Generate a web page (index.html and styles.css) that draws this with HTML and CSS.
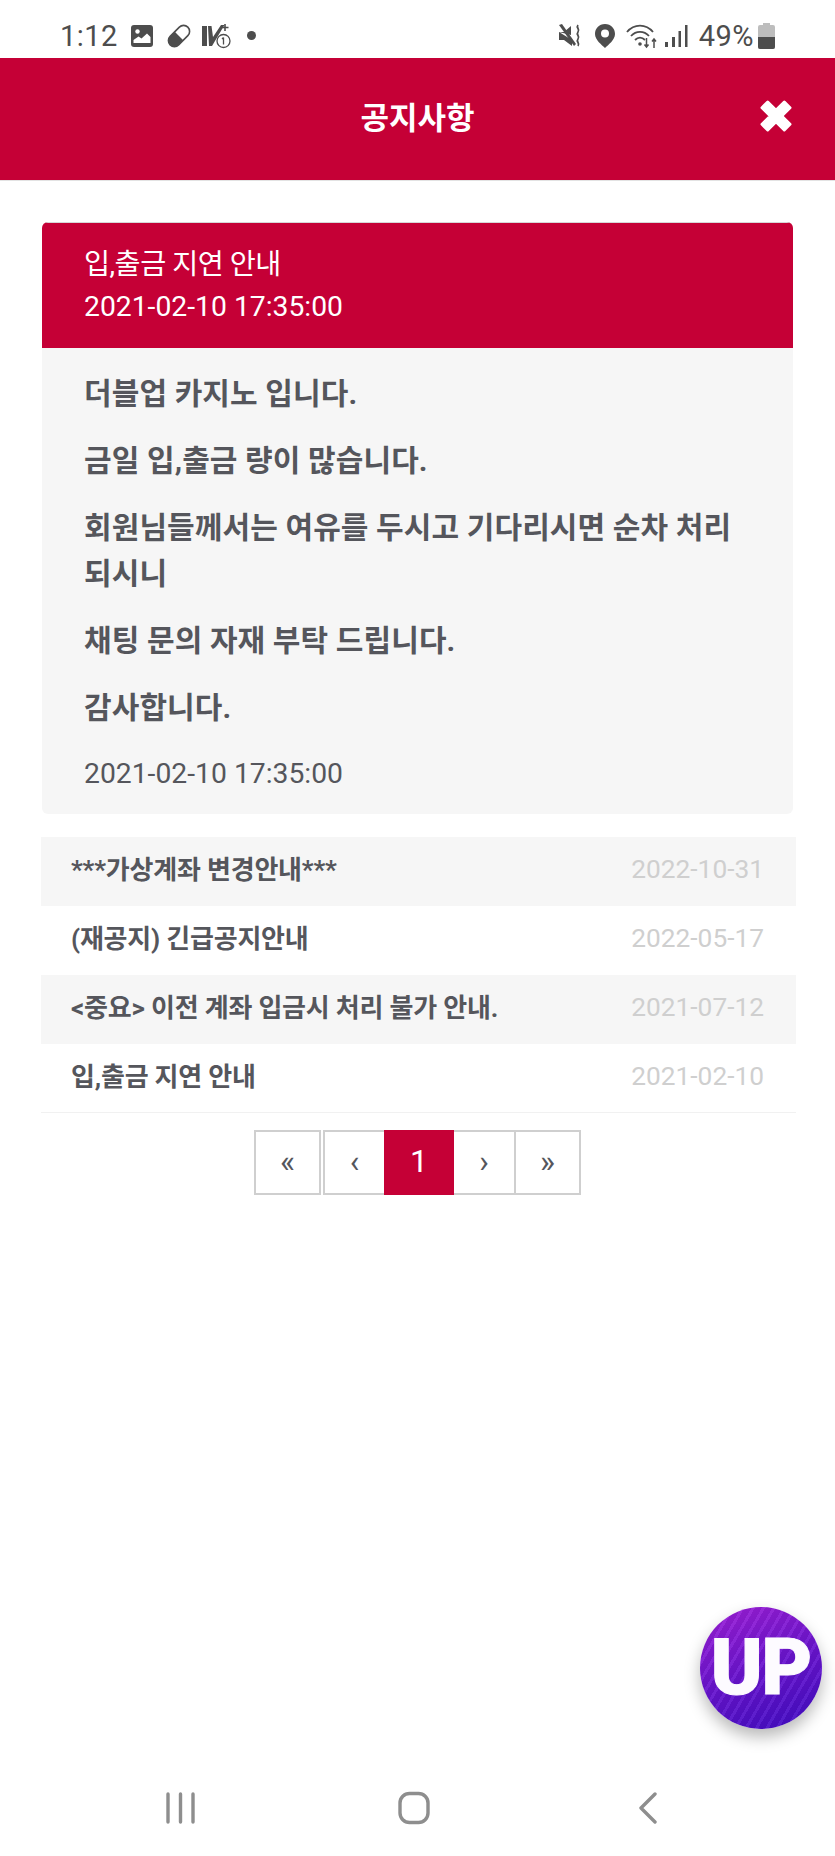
FILE: index.html
```html
<!DOCTYPE html>
<html lang="ko">
<head>
<meta charset="utf-8">
<title>공지사항</title>
<link rel="stylesheet" href="styles.css">
</head>
<body>
<div class="app">
  <div class="status">
    <div class="status-left">
      <span class="clock">1:12</span>
      <svg class="ic" width="24" height="24" viewBox="0 0 24 24"><rect x="1" y="1" width="22" height="22" rx="3" fill="#4d4d4d"/><circle cx="7.5" cy="7.5" r="2.2" fill="#fff"/><path d="M3.5 19v-3l5-3.5 3 2 5.500-5 3.500 3.500v6z" fill="#fff"/></svg>
      <svg class="ic pill" width="26" height="26" viewBox="0 0 26 26"><g transform="rotate(-45 13 13)"><rect x="0.500" y="7" width="25" height="12" rx="6" fill="#fff" stroke="#4d4d4d" stroke-width="1.600"/><path d="M13 7H6.500a6 6 0 0 0 0 12H13z" fill="#4d4d4d"/></g></svg>
      <svg class="ic vol" width="31" height="26" viewBox="0 0 31 26"><path d="M1 3h5v20H1zM7 3h3.500l1.500 11L20 2h3.500L11 23H8z" fill="#4d4d4d"/><path d="M24 1v7M20.500 4.500h7" stroke="#4d4d4d" stroke-width="1.600"/><circle cx="22.500" cy="18" r="6.500" fill="#fff" stroke="#4d4d4d" stroke-width="1.300"/><path d="M22.500 14.500v7M21 16l1.500-1.500" stroke="#4d4d4d" stroke-width="1.300" fill="none"/></svg>
      <span class="dot"></span>
    </div>
    <div class="status-right">
      <svg class="ic" width="26" height="26" viewBox="0 0 26 26"><path d="M1 2l3-1 14 20-2 2z" fill="#4d4d4d"/><path d="M1 9h5l7-6v9zM1 9v8h5l8 6v-6z" fill="#4d4d4d"/><path d="M20 2c-2.500 3 2.500 4 0 7s2.500 4 0 7 2.500 4 0 7" fill="none" stroke="#4d4d4d" stroke-width="1.800"/></svg>
      <svg class="ic" width="22" height="26" viewBox="0 0 22 26"><path d="M11 1C5 1 1 5.500 1 11c0 6 7 11 10 14 3-3 10-8 10-14C21 5.500 17 1 11 1z" fill="#4d4d4d"/><circle cx="11" cy="10.500" r="4" fill="#fff"/></svg>
      <svg class="ic" width="32" height="26" viewBox="0 0 32 26"><g fill="none" stroke="#4d4d4d" stroke-width="1.800"><path d="M1 9c7-8.500 19-8.500 26 0"/><path d="M5 13c5-5.500 13-5.500 18 0"/><path d="M9 17c3-3 7-3 10 0"/></g><circle cx="14" cy="21" r="1.800" fill="#4d4d4d"/><path d="M20.500 15v9M18.500 21.500l2 2.500 2-2.500M28 25v-9M26 18.500l2-2.500 2 2.500" fill="none" stroke="#4d4d4d" stroke-width="1.500"/></svg>
      <svg class="ic sig" width="24" height="24" viewBox="0 0 24 24"><path d="M1 18h3v5H1zM8 13h3v10H8zM14.500 7H17v16h-2.500zM21 1h2.500v22H21z" fill="#4d4d4d"/></svg>
      <span class="pct">49%</span>
      <svg class="ic batt" width="17" height="26" viewBox="0 0 17 26"><path d="M5 0h7v2h3a2 2 0 0 1 2 2v20a2 2 0 0 1-2 2H2a2 2 0 0 1-2-2V4a2 2 0 0 1 2-2h3z" fill="#bdbdbd"/><path d="M0 14h17v10a2 2 0 0 1-2 2H2a2 2 0 0 1-2-2z" fill="#4d4d4d"/></svg>
    </div>
  </div>

  <header class="top">
    <h1 class="top-title">공지사항</h1>
    <svg class="top-close" width="36" height="36" viewBox="0 0 36 36"><path d="M18 12.300 26.300 4 32 9.700 23.700 18 32 26.300 26.300 32 18 23.700 9.700 32 4 26.300 12.300 18 4 9.700 9.700 4z" fill="#fff" stroke="#fff" stroke-width="3" stroke-linejoin="round"/></svg>
  </header>

  <main class="content">
    <section class="card">
      <div class="card-head">
        <div class="card-subject">입,출금 지연 안내</div>
        <div>2021-02-10 17:35:00</div>
      </div>
      <div class="card-body">
        <p class="msg">더블업 카지노 입니다.</p>
        <p class="msg">금일 입,출금 량이 많습니다.</p>
        <p class="msg">회원님들께서는 여유를 두시고 기다리시면 순차 처리 되시니</p>
        <p class="msg">채팅 문의 자재 부탁 드립니다.</p>
        <p class="msg">감사합니다.</p>
        <div class="card-date">2021-02-10 17:35:00</div>
      </div>
    </section>

    <ul class="list">
      <li class="row alt"><span class="row-title">***가상계좌 변경안내***</span><span class="row-date">2022-10-31</span></li>
      <li class="row"><span class="row-title">(재공지) 긴급공지안내</span><span class="row-date">2022-05-17</span></li>
      <li class="row alt"><span class="row-title">&lt;중요&gt; 이전 계좌 입금시 처리 불가 안내.</span><span class="row-date">2021-07-12</span></li>
      <li class="row"><span class="row-title">입,출금 지연 안내</span><span class="row-date">2021-02-10</span></li>
    </ul>

    <nav class="pager">
      <a class="pg pg-first">«</a>
      <a class="pg pg-prev">‹</a>
      <a class="pg pg-on">1</a>
      <a class="pg pg-next">›</a>
      <a class="pg pg-last">»</a>
    </nav>
  </main>

  <div class="up"><span class="up-text">UP</span></div>

  <footer class="navbar">
    <svg width="32" height="32" viewBox="0 0 32 32"><path d="M3 2v28M15.500 2v28M28 2v28" stroke="#8e8e8e" stroke-width="3.400" stroke-linecap="round"/></svg>
    <svg class="nav-home" width="32" height="34" viewBox="0 0 32 34"><rect x="2" y="2.500" width="28" height="29" rx="9.500" fill="none" stroke="#8e8e8e" stroke-width="3.400"/></svg>
    <svg class="nav-back" width="20" height="32" viewBox="0 0 20 32"><path d="M17 2 3 16l14 14" fill="none" stroke="#8e8e8e" stroke-width="3.400" stroke-linecap="round" stroke-linejoin="round"/></svg>
  </footer>
</div>
</body>
</html>
```

FILE: styles.css
```css
* { box-sizing: border-box; }
html, body { margin: 0; padding: 0; background: #fff; }
body { font-family: Roboto, "Noto Sans CJK KR", "Noto Sans", sans-serif; color: #55565c; }
.app { position: relative; width: 835px; height: 1856px; display: flex; flex-direction: column; overflow: hidden; }

.status { height: 58px; display: flex; justify-content: space-between; align-items: center; padding: 13px 60px 0 60px; color: #4d4d4d; }
.status-left, .status-right { display: flex; align-items: center; }
.clock { font-size: 29px; margin-right: 12px; letter-spacing: 0.5px; }
.ic { flex: none; }
.pill { margin-left: 12px; }
.vol { margin-left: 9px; }
.dot { width: 9px; height: 9px; border-radius: 50%; background: #4d4d4d; margin-left: 15px; }
.status-right .ic { margin-left: 10px; }
.status-right .sig { margin-left: 6px; }
.pct { font-size: 29px; margin-left: 11px; letter-spacing: 0.5px; }
.status-right .batt { margin-left: 4px; }

.top { position: relative; height: 123px; background: #c50036; display: flex; align-items: center; justify-content: center; border-bottom: 1px solid #e3e3e3; }
.top-title { margin: 0; font-size: 31px; font-weight: 700; color: #fff; line-height: 1.2; }
.top-close { position: absolute; right: 41px; top: 40px; }

.content { flex: 1; padding: 41px 42px 0 42px; min-height: 0; }

.card { background: #f6f6f6; border-radius: 6px; overflow: hidden; }
.card-head { height: 126px; background: #c50036; color: #fff; font-size: 28.3px; padding: 21px 42px 0; line-height: 42px; border-top: 1px solid #d7d7d7; }
.card-subject { letter-spacing: -0.5px; }
.card-body { padding: 23px 42px 0; height: 466px; }
.msg { margin: 0 0 21px; font-size: 30px; line-height: 46px; font-weight: 700; color: #55565c; letter-spacing: 0.1px; }
.card-date { font-size: 28.3px; line-height: 42px; margin-top: 22px; color: #55565c; }

.list { list-style: none; margin: 23px -3px 0 -1px; padding: 0; }
.row { height: 69px; display: flex; justify-content: space-between; align-items: center; padding: 0 32px 0 30px; border-bottom: 1px solid transparent; }
.row.alt { background: #f6f6f6; }
.row:last-child { border-bottom-color: #f1f1f1; }
.row-title { font-size: 26px; font-weight: 700; color: #55565c; letter-spacing: -0.2px; margin-top: -7px; }
.row-date { font-size: 26.3px; color: #cfcfcf; margin-top: -4px; }

.pager { display: flex; justify-content: center; margin: 17px 0 0 0; }
.pg { height: 65px; display: flex; align-items: center; justify-content: center; border: 2px solid #cfcfcf; background: #fff; color: #55565c; font-size: 32px; padding-bottom: 3px; }
.pg-first { width: 67px; margin-right: 2px; }
.pg-prev { width: 61px; border-right: 0; }
.pg-on { width: 70px; background: #c50036; border-color: #c50036; color: #fff; font-size: 32px; }
.pg-next { width: 60px; border-left: 0; border-right: 0; }
.pg-last { width: 67px; }

.up { position: absolute; left: 700px; top: 1607px; width: 122px; height: 122px; border-radius: 50%; background: repeating-linear-gradient(120deg, rgba(255,255,255,.06) 0 3px, rgba(0,0,0,.06) 3px 9px), linear-gradient(160deg, #a01fd8 0%, #6a14cf 50%, #3f0cc4 100%); box-shadow: 0 8px 16px rgba(0,0,0,.28); display: flex; align-items: center; justify-content: center; overflow: hidden; }
.up-text { font-family: Roboto, sans-serif; font-weight: 900; font-size: 78px; line-height: 1; color: #fdfbff; letter-spacing: -1px; -webkit-text-stroke: 1px #fdfbff; }

.navbar { height: 128px; display: flex; align-items: center; padding: 31px 0 0 165px; }
.nav-home { margin-left: 201px; }
.nav-back { margin-left: 208px; }
```
